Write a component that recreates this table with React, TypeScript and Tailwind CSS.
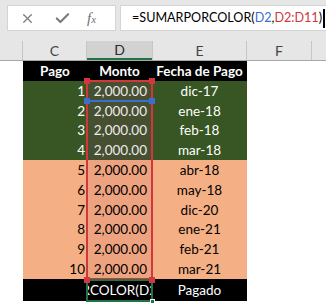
import { X, Check } from "lucide-react";

const rows = [
  { n: "1", fecha: "dic-17" },
  { n: "2", fecha: "ene-18" },
  { n: "3", fecha: "feb-18" },
  { n: "4", fecha: "mar-18" },
  { n: "5", fecha: "abr-18" },
  { n: "6", fecha: "may-18" },
  { n: "7", fecha: "dic-20" },
  { n: "8", fecha: "ene-21" },
  { n: "9", fecha: "feb-21" },
  { n: "10", fecha: "mar-21" },
];

export default function App() {
  return (
    <div className="w-[326px] h-[303px] bg-white overflow-hidden font-['Lato','Open_Sans',sans-serif]">
      {/* formula bar */}
      <div className="h-[41px] bg-[#e6e6e6] flex items-start pt-[5px] pl-[7px] gap-[4px]">
        <div className="w-[109px] h-[26px] bg-white border border-[#d4d4d4] flex items-center text-[#7b7b7b]">
          <X size={15} strokeWidth={2} className="ml-[12px]" />
          <Check size={17} strokeWidth={3} className="ml-[19px]" />
          <span className="ml-[16px] font-['Liberation_Serif',serif] italic text-[15px] text-[#6f6f6f] leading-none">
            f<span className="text-[11px]">x</span>
          </span>
        </div>
        <div className="flex-1 min-w-0 h-[26px] bg-white border border-r-0 border-[#d4d4d4] flex items-center pl-[11px] text-[12.6px] text-black whitespace-nowrap">
          <span>=SUMARPORCOLOR(</span>
          <span className="text-[#3a6fd0]">D2</span>
          <span>,</span>
          <span className="text-[#d1373d]">D2:D11</span>
          <span>)</span>
          <span className="w-[1.5px] h-[19px] bg-black ml-[1px]" />
        </div>
      </div>

      {/* column headers */}
      <div className="h-[20px] bg-[#e6e6e6] border-b border-[#a8a8a8] flex text-[14px] text-[#444]">
        <div className="w-[23px] border-r border-[#c6c6c6]" />
        <div className="w-[64px] border-r border-[#c6c6c6] flex items-center justify-center">C</div>
        <div className="w-[65px] bg-[#d2d2d2] border-b-2 border-[#217346] flex items-center justify-center text-[#2b2b2b]">
          D
        </div>
        <div className="w-[95px] border-l border-r border-[#c6c6c6] flex items-center justify-center">E</div>
        <div className="w-[65px] border-r border-[#c6c6c6] flex items-center justify-center">F</div>
        <div className="flex-1" />
      </div>

      {/* sheet */}
      <div className="pl-[23px]">
        <div className="relative w-[224px] text-[13.5px]">
          <div className="h-[20px] bg-black text-white font-bold flex">
            <div className="w-[64px] flex items-center justify-center">Pago</div>
            <div className="w-[65px] flex items-center justify-center">Monto</div>
            <div className="w-[95px] flex items-center justify-center">Fecha de Pago</div>
          </div>

          {rows.map((r, i) => {
            const green = i < 4;
            return (
              <div
                key={r.n}
                className={`h-[19.8px] flex ${green ? "bg-[#375623] text-white" : "bg-[#f4b084] text-black"}`}
              >
                <div className="w-[64px] flex items-center justify-end pr-[2px]">{r.n}</div>
                <div
                  className={`w-[65px] flex items-center justify-end pr-[5px] ${
                    green ? "bg-[#474f31] text-[#ececec]" : "bg-[#eda37f]"
                  }`}
                >
                  2,000.00
                </div>
                <div className="w-[95px] flex items-center justify-center">{r.fecha}</div>
              </div>
            );
          })}

          <div className="h-[22px] bg-black text-white flex">
            <div className="w-[64px]" />
            <div className="w-[65px] overflow-hidden flex items-center justify-end">
              <span className="whitespace-nowrap -mr-[5px]">=SUMARPORCOLOR(D2</span>
            </div>
            <div className="w-[95px] flex items-center justify-center">Pagado</div>
          </div>

          {/* range reference D2:D11 */}
          <div className="absolute left-[63px] top-[19px] w-[67px] h-[200px] border-2 border-[#d1373d]" />
          <div className="absolute left-[63px] top-[39px] w-[67px] h-[2px] bg-[#3a6fd0]" />
          <div className="absolute left-[61px] top-[17px] w-[6px] h-[6px] bg-[#d1373d]" />
          <div className="absolute left-[126px] top-[17px] w-[6px] h-[6px] bg-[#d1373d]" />
          <div className="absolute left-[61px] top-[37px] w-[6px] h-[6px] bg-[#3a6fd0]" />
          <div className="absolute left-[126px] top-[37px] w-[6px] h-[6px] bg-[#3a6fd0]" />

          {/* active cell D12 */}
          <div className="absolute left-[63px] top-[218px] w-[67px] h-[23px] border-2 border-[#217346]" />
          <div className="absolute left-[61px] top-[216px] w-[6px] h-[6px] bg-[#d1373d]" />
          <div className="absolute left-[126px] top-[216px] w-[6px] h-[6px] bg-[#d1373d]" />
          <div className="absolute left-[127px] top-[238px] w-[5px] h-[5px] bg-[#217346] border border-white" />
        </div>
      </div>
    </div>
  );
}
